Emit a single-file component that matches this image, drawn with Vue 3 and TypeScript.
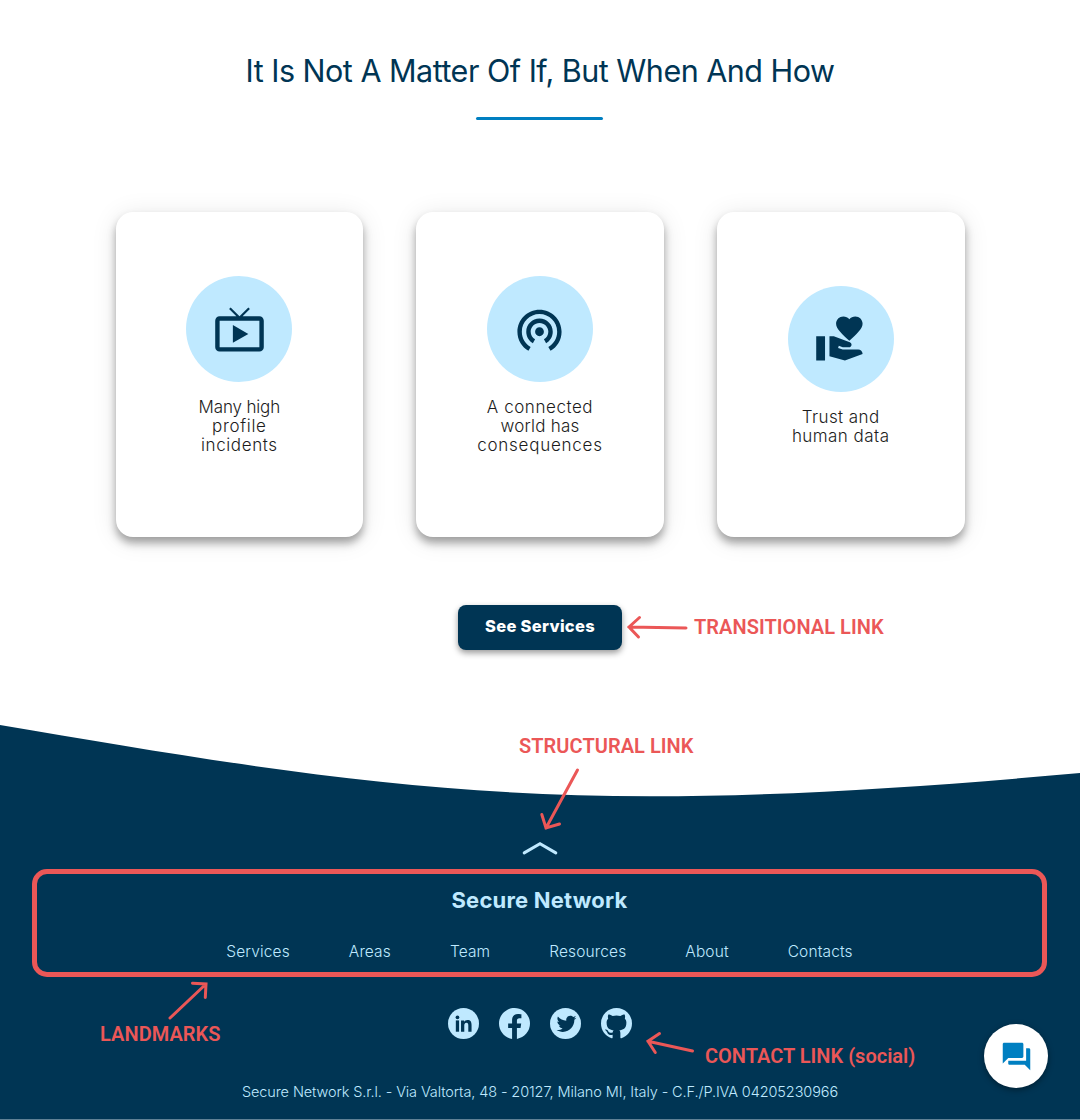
<script setup lang="ts">
interface Line {
  text: string
  tracking: number
}

interface Card {
  lines: Line[]
  icon: string
}

const cards: Card[] = [
  {
    lines: [
      { text: 'Many high', tracking: -0.15 },
      { text: 'profile', tracking: 0.7 },
      { text: 'incidents', tracking: 0.6 },
    ],
    icon: 'M21 6h-7.59l3.29-3.29L16 2l-4 4-4-4-.71.71L10.59 6H3c-1.1 0-2 .89-2 2v12c0 1.1.9 2 2 2h18c1.1 0 2-.9 2-2V8c0-1.11-.9-2-2-2zm0 14H3V8h18v12zM9 10v8l7-4z',
  },
  {
    lines: [
      { text: 'A connected', tracking: 0.55 },
      { text: 'world has', tracking: 0.2 },
      { text: 'consequences', tracking: 0.75 },
    ],
    icon: 'M12 11c-1.1 0-2 .9-2 2s.9 2 2 2 2-.9 2-2-.9-2-2-2zm6 2c0-3.31-2.69-6-6-6s-6 2.69-6 6c0 2.22 1.21 4.15 3 5.19l1-1.74c-1.19-.7-2-1.97-2-3.45 0-2.21 1.79-4 4-4s4 1.79 4 4c0 1.48-.81 2.75-2 3.45l1 1.74c1.79-1.04 3-2.97 3-5.19zM12 3C6.48 3 2 7.48 2 13c0 3.7 2.01 6.92 4.99 8.65l1-1.73C5.61 18.53 4 15.96 4 13c0-4.42 3.58-8 8-8s8 3.58 8 8c0 2.96-1.61 5.53-4 6.92l1 1.73c2.99-1.73 5-4.95 5-8.65 0-5.52-4.48-10-10-10z',
  },
  {
    lines: [
      { text: 'Trust and', tracking: 0.4 },
      { text: 'human data', tracking: 0.45 },
    ],
    icon: 'M1 11h4v11H1zM16 3.25C16.65 2.49 17.66 2 18.7 2 20.55 2 22 3.45 22 5.3c0 2.27-2.91 4.9-6 7.7-3.09-2.81-6-5.44-6-7.7C10 3.45 11.45 2 13.3 2c1.04 0 2.05.49 2.7 1.25zM20 17h-7l-2.09-.73.33-.94L13 16h2.82c.65 0 1.18-.53 1.18-1.18 0-.49-.31-.93-.77-1.11L8.97 11H7v9.02L14 22l8.01-3c-.01-1.1-.9-2-2.01-2z',
  },
]

const links: string[] = ['Services', 'Areas', 'Team', 'Resources', 'About', 'Contacts']
</script>

<template>
  <div class="page">
    <main class="main">
      <h1 class="title">It Is Not A Matter Of If, But When And How</h1>
      <div class="rule"></div>
      <div class="cards">
        <article v-for="card in cards" :key="card.icon" class="card">
          <div class="disc">
            <svg viewBox="0 0 24 24" width="53" height="53"><path :d="card.icon" fill="#003554" /></svg>
          </div>
          <p class="caption">
            <span v-for="line in card.lines" :key="line.text" :style="{ letterSpacing: line.tracking + 'px' }">{{ line.text }}</span>
          </p>
        </article>
      </div>
      <a class="cta"><span>See Services</span></a>
    </main>

    <footer class="footer">
      <svg class="wave" viewBox="0 0 1080 72" width="1080" height="72">
        <path d="M0 0C225 38 415 71.3 650 71.3C785 71.3 930 61.5 1080 48V72H0Z" fill="#003554" />
      </svg>
      <div class="body">
        <svg class="chevron" viewBox="0 0 38 16" width="38" height="16">
          <path d="M3.2 11.9L19 2.7L34.8 11.9" fill="none" stroke="#bfe9ff" stroke-width="3" stroke-linecap="round" />
        </svg>
        <section class="landmarks">
          <h2 class="brand">Secure Network</h2>
          <nav class="nav">
            <a v-for="link in links" :key="link">{{ link }}</a>
          </nav>
        </section>
        <div class="social">
          <svg viewBox="0 0 20 20" width="31" height="31">
            <circle cx="10" cy="10" r="10" fill="#bfe9ff" />
            <g fill="#003554">
              <circle cx="6.1" cy="6" r="1.2" />
              <rect x="5.05" y="8" width="2.1" height="7.3" />
              <path d="M8.4 8h2v1c.4-.7 1.2-1.2 2.2-1.2 2 0 2.6 1.3 2.6 3.1v4.4h-2.1v-3.9c0-1-.1-1.9-1.2-1.9s-1.4.9-1.4 1.9v3.9h-2.1z" />
            </g>
          </svg>
          <svg viewBox="2 2.04 20 20" width="31" height="31">
            <path fill="#bfe9ff" d="M12 2.04C6.5 2.04 2 6.53 2 12.06C2 17.06 5.66 21.21 10.44 21.96V14.96H7.9V12.06H10.44V9.85C10.44 7.34 11.93 5.96 14.22 5.96C15.31 5.96 16.45 6.15 16.45 6.15V8.62H15.19C13.95 8.62 13.56 9.39 13.56 10.18V12.06H16.34L15.89 14.96H13.56V21.96A10 10 0 0 0 22 12.06C22 6.53 17.5 2.04 12 2.04Z" />
          </svg>
          <svg viewBox="0 0 20 20" width="31" height="31">
            <circle cx="10" cy="10" r="10" fill="#bfe9ff" />
            <path transform="translate(3.3 2.6) scale(.61)" fill="#003554" d="M22.46,6C21.69,6.35 20.86,6.58 20,6.69C20.88,6.16 21.56,5.32 21.88,4.31C21.05,4.81 20.13,5.16 19.16,5.36C18.37,4.5 17.26,4 16,4C13.65,4 11.73,5.92 11.73,8.29C11.73,8.63 11.77,8.96 11.84,9.27C8.28,9.09 5.11,7.38 3,4.79C2.63,5.42 2.42,6.16 2.42,6.94C2.42,8.43 3.17,9.75 4.33,10.5C3.62,10.5 2.96,10.3 2.38,10C2.38,12.11 3.86,13.85 5.82,14.24C5.46,14.34 5.08,14.39 4.69,14.39C4.42,14.39 4.15,14.36 3.89,14.31C4.43,16 6,17.26 7.89,17.29C6.43,18.45 4.58,19.13 2.56,19.13C2.22,19.13 1.88,19.11 1.54,19.07C3.44,20.29 5.7,21 8.12,21C16,21 20.33,14.46 20.33,8.79C20.33,8.6 20.33,8.42 20.32,8.23C21.16,7.63 21.88,6.87 22.46,6Z" />
          </svg>
          <svg viewBox="2 2 20 20" width="31" height="31">
            <path fill="#bfe9ff" d="M12,2A10,10 0 0,0 2,12C2,16.42 4.87,20.17 8.84,21.5C9.34,21.58 9.5,21.27 9.5,21C9.5,20.77 9.5,20.14 9.5,19.31C6.73,19.91 6.14,17.97 6.14,17.97C5.68,16.81 5.03,16.5 5.03,16.5C4.12,15.88 5.1,15.9 5.1,15.9C6.1,15.97 6.63,16.93 6.63,16.93C7.5,18.45 8.97,18 9.54,17.76C9.63,17.11 9.89,16.67 10.17,16.42C7.95,16.17 5.62,15.31 5.62,11.5C5.62,10.39 6,9.5 6.65,8.79C6.55,8.54 6.2,7.5 6.75,6.15C6.75,6.15 7.59,5.88 9.5,7.17C10.29,6.95 11.15,6.84 12,6.84C12.85,6.84 13.71,6.95 14.5,7.17C16.41,5.88 17.25,6.15 17.25,6.15C17.8,7.5 17.45,8.54 17.35,8.79C18,9.5 18.38,10.39 18.38,11.5C18.38,15.32 16.04,16.16 13.81,16.41C14.17,16.72 14.5,17.33 14.5,18.26C14.5,19.6 14.5,20.68 14.5,21C14.5,21.27 14.66,21.59 15.17,21.5C19.14,20.16 22,16.42 22,12A10,10 0 0,0 12,2Z" />
          </svg>
        </div>
        <p class="legal">Secure Network S.r.l. - Via Valtorta, 48 - 20127, Milano MI, Italy - C.F./P.IVA 04205230966</p>
      </div>
    </footer>

    <button class="chat" aria-label="Chat">
      <svg viewBox="0 0 24 24" width="33" height="33">
        <path fill="#007fc1" d="M21 6h-2v9H6v2c0 .55.45 1 1 1h11l4 4V7c0-.55-.45-1-1-1zm-4 6V3c0-.55-.45-1-1-1H3c-.55 0-1 .45-1 1v14l4-4h10c.55 0 1-.45 1-1z" />
      </svg>
    </button>

    <svg class="arrows" viewBox="0 0 1080 1120" width="1080" height="1120">
      <g fill="none" stroke="#eb5757" stroke-width="3" stroke-linecap="round">
        <path d="M686 628L629 627M639.5 617.5L629 627L638.5 637" />
        <path d="M577.5 770L546 828M541.8 814.5L546 828L559.5 824" />
        <path d="M170 1018L206 984M192.5 983.3L206 984L205.3 997.5" />
        <path d="M692.5 1051L648 1041.2M659.5 1033.5L648 1041.2L655.3 1052.5" />
      </g>
    </svg>
    <span class="note transitional">TRANSITIONAL LINK</span>
    <span class="note structural">STRUCTURAL LINK</span>
    <span class="note marks">LANDMARKS</span>
    <span class="note contact">CONTACT LINK (social)</span>
  </div>
</template>

<style>
body {
  margin: 0;
  background: #fff;
}
</style>

<style scoped>
.page {
  position: relative;
  width: 1080px;
  height: 1120px;
  overflow: hidden;
  background: #fff;
  font-family: Inter, "Liberation Sans", sans-serif;
  display: flex;
  flex-direction: column;
}
.main {
  height: 725px;
  display: flex;
  flex-direction: column;
  align-items: center;
}
.title {
  margin: 51px 0 0;
  height: 39px;
  line-height: 40px;
  font-size: 30.5px;
  font-weight: 400;
  letter-spacing: -0.5px;
  color: #003554;
  white-space: nowrap;
}
.rule {
  margin: 27px 1px 0 0;
  width: 127px;
  height: 3px;
  border-radius: 2px;
  background: #007fc1;
}
.cards {
  margin-top: 92px;
  width: 849px;
  display: grid;
  grid-template-columns: repeat(3, 1fr);
  gap: 53px;
}
.card {
  box-sizing: border-box;
  height: 325px;
  padding: 18.4px 0 36px;
  border-radius: 17px;
  background: #fff;
  box-shadow: 0 6px 9px rgba(0, 0, 0, 0.34), 0 3px 26px rgba(0, 0, 0, 0.1);
  display: flex;
  flex-direction: column;
  align-items: center;
  justify-content: center;
}
.disc {
  width: 106px;
  height: 106px;
  border-radius: 50%;
  background: #bfe9ff;
  display: flex;
  align-items: center;
  justify-content: center;
}
.caption {
  margin: 16px 0 0;
  display: flex;
  flex-direction: column;
  align-items: center;
  font-size: 17px;
  line-height: 19px;
  font-weight: 300;
  color: #1c1c1c;
}
.cta {
  margin-top: 68px;
  width: 164px;
  height: 45px;
  border-radius: 8px;
  background: #003554;
  box-shadow: 0 3px 6px rgba(0, 0, 0, 0.4);
  color: #fff;
  font-size: 16.5px;
  font-weight: 800;
  letter-spacing: 0.3px;
  line-height: 42px;
  text-align: center;
}
.footer {
  display: flex;
  flex-direction: column;
}
.wave {
  display: block;
}
.body {
  box-sizing: border-box;
  height: 323px;
  background: #003554;
  border-bottom: 1px solid #5f8195;
  display: flex;
  flex-direction: column;
  align-items: center;
}
.chevron {
  margin-top: 44px;
}
.landmarks {
  box-sizing: border-box;
  margin: 12px 1px 0 0;
  width: 1015px;
  height: 108px;
  border: 5px solid #eb5757;
  border-radius: 15px;
  display: flex;
  flex-direction: column;
  align-items: center;
}
.brand {
  margin: 11px 0 0;
  line-height: 30px;
  font-size: 22px;
  font-weight: 700;
  letter-spacing: 0.2px;
  color: #bfe9ff;
}
.nav {
  margin-top: 27px;
  display: flex;
  gap: 59px;
  font-size: 15.5px;
  line-height: 20px;
  font-weight: 300;
  letter-spacing: 0.13px;
  color: #bfe9ff;
}
.social {
  margin-top: 31px;
  display: flex;
  gap: 20px;
}
.legal {
  margin: 43px 0 0;
  font-size: 14.5px;
  line-height: 20px;
  font-weight: 300;
  letter-spacing: -0.11px;
  color: #bfe9ff;
  white-space: nowrap;
}
.chat {
  position: absolute;
  left: 984px;
  top: 1024px;
  width: 64px;
  height: 64px;
  padding: 0;
  border: 0;
  border-radius: 50%;
  background: #fff;
  box-shadow: 0 2px 6px rgba(0, 0, 0, 0.4);
  display: flex;
  align-items: center;
  justify-content: center;
}
.arrows {
  position: absolute;
  left: 0;
  top: 0;
  pointer-events: none;
}
.note {
  position: absolute;
  font-family: Roboto, "Liberation Sans", sans-serif;
  font-size: 20px;
  line-height: 24px;
  font-weight: 600;
  letter-spacing: 0.05px;
  color: #eb5757;
  white-space: nowrap;
}
.transitional {
  left: 694px;
  top: 615px;
}
.structural {
  left: 519px;
  top: 734px;
}
.marks {
  left: 100px;
  top: 1022px;
}
.contact {
  left: 705px;
  top: 1044px;
  letter-spacing: 0;
}
</style>
